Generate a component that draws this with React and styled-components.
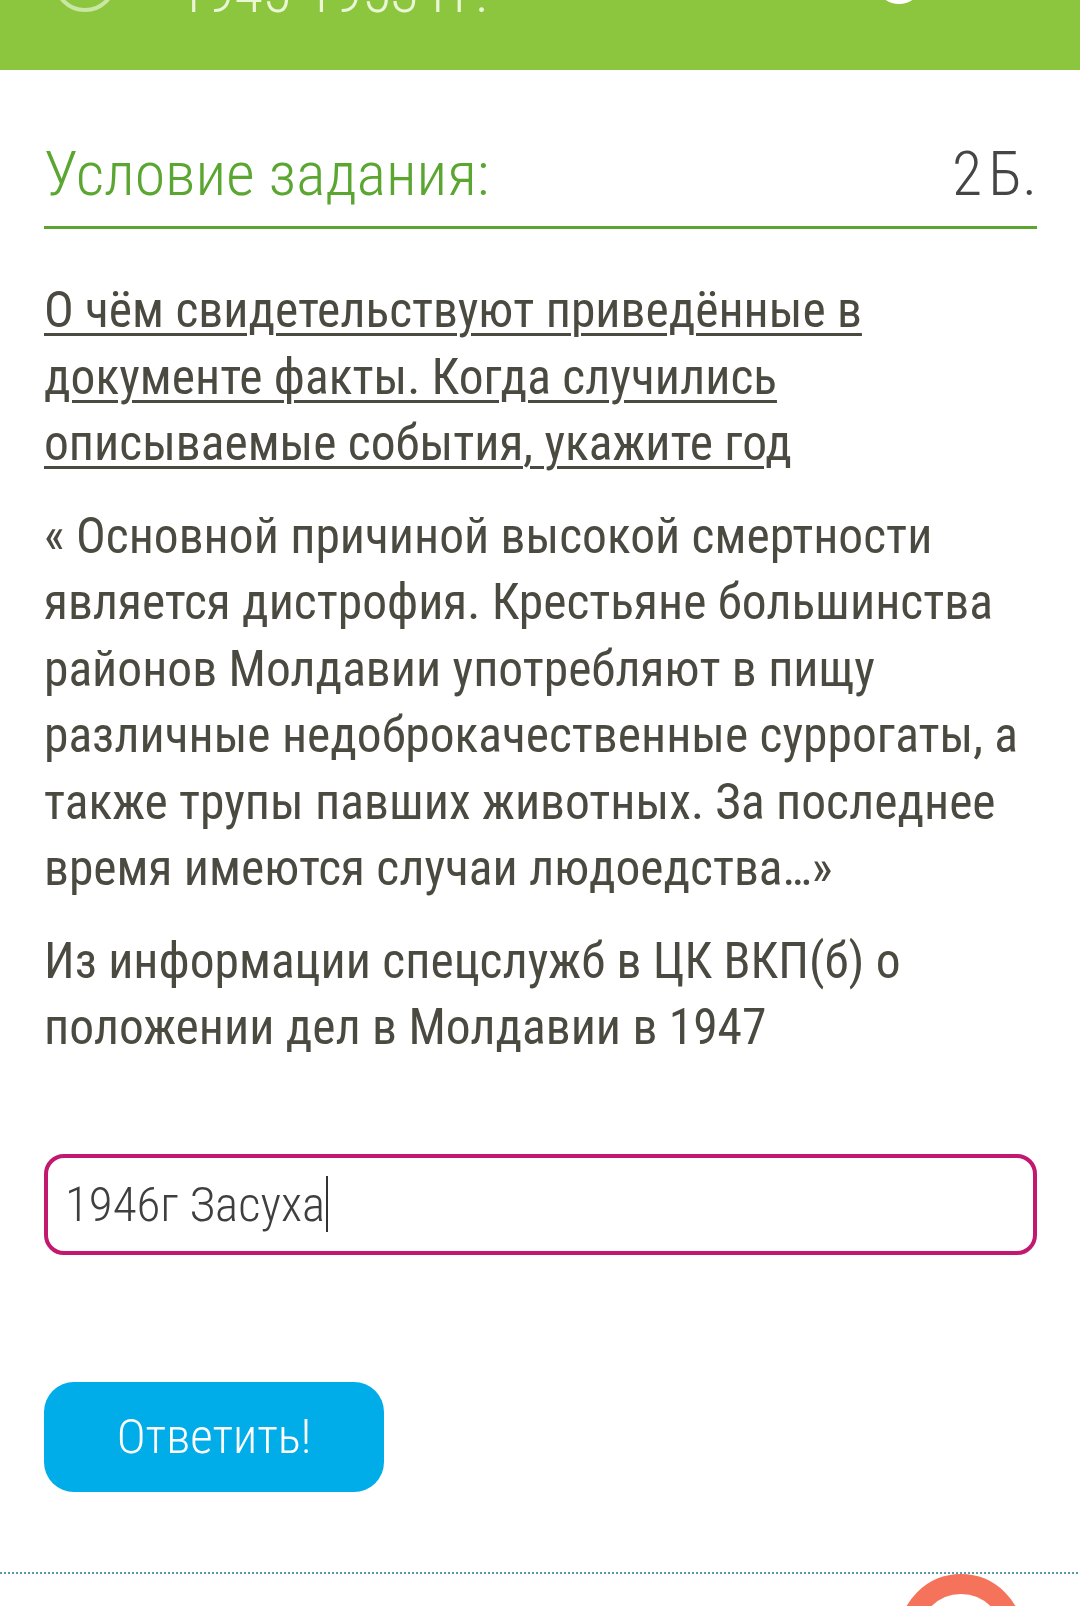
import React from 'react';
import styled, { createGlobalStyle } from 'styled-components';

const GlobalStyle = createGlobalStyle`
    html, body {
        margin: 0;
        padding: 0;
        background: #ffffff;
    }
    body {
        font-family: "Roboto Condensed", Roboto, sans-serif;
    }
`

const Page = styled.div`
    width: 1080px;
    height: 1606px;
    overflow: hidden;
    background: #ffffff;
`

const Header = styled.header`
    height: 70px;
    background: #8cc63f;
    overflow: hidden;
`

const HeaderRow = styled.div`
    display: flex;
    align-items: center;
    height: 80px;
    margin-top: -60px;
    padding: 0 157px 0 53px;
`

const Ring = styled.div`
    box-sizing: border-box;
    width: ${p => p.size}px;
    height: ${p => p.size}px;
    border-radius: 50%;
    border: ${p => p.stroke}px solid ${p => p.color};
    flex-shrink: 0;
`

const HeaderTitle = styled.div`
    flex: 1;
    margin: 24px 0 0 61px;
    font-size: 58px;
    font-weight: 300;
    color: #eaf6d6;
    white-space: nowrap;
`

const Main = styled.main`
    padding: 0 43px 0 44px;
`

const TaskHead = styled.div`
    display: flex;
    justify-content: space-between;
    align-items: baseline;
    margin-top: 66px;
    padding-bottom: 14px;
    border-bottom: 3px solid #5aa631;
    font-size: 62px;
    line-height: 76px;
    font-weight: 300;
`

const TaskTitle = styled.span`
    color: #5aa631;
`

const Points = styled.span`
    color: #454545;
    word-spacing: -8px;
`

const Paragraph = styled.p`
    margin: ${p => p.first ? '48px' : '26px'} 0 0;
    font-size: 49.5px;
    line-height: 66.5px;
    color: #4b4a40;
    text-decoration: ${p => p.underlined ? 'underline' : 'none'};
    text-decoration-thickness: 3px;
    text-underline-offset: 6px;
`

const AnswerBox = styled.div`
    box-sizing: border-box;
    display: flex;
    align-items: center;
    height: 101px;
    margin-top: 93px;
    padding: 0 17px;
    border: 4px solid #c2186f;
    border-radius: 20px;
    font-size: 49px;
    font-weight: 300;
    color: #3f3f3f;
`

const Caret = styled.span`
    display: inline-block;
    width: 2px;
    height: 56px;
    margin-left: 1px;
    background: #333333;
`

const SubmitButton = styled.button`
    display: block;
    width: 340px;
    height: 110px;
    margin-top: 127px;
    border: none;
    border-radius: 30px;
    background: #00ade9;
    color: #ffffff;
    font-family: inherit;
    font-size: 49px;
    font-weight: 300;
`

const Divider = styled.div`
    height: 2px;
    margin-top: 80px;
    background-image: linear-gradient(to right, #5b9aa8 50%, transparent 50%);
    background-size: 4px 2px;
`

const Footer = styled.div`
    display: flex;
    justify-content: flex-end;
    padding-right: 57px;
`

const App = () => {
    return (
        <Page>
            <GlobalStyle />
            <Header>
                <HeaderRow>
                    <Ring size={64} stroke={4} color="#c9e6a3" />
                    <HeaderTitle>1945-1953 гг.</HeaderTitle>
                    <Ring size={48} stroke={6} color="#ffffff" />
                </HeaderRow>
            </Header>
            <Main>
                <TaskHead>
                    <TaskTitle>Условие задания:</TaskTitle>
                    <Points>2 Б.</Points>
                </TaskHead>
                <Paragraph first underlined>
                    О чём свидетельствуют приведённые в документе факты. Когда случились описываемые события, укажите год
                </Paragraph>
                <Paragraph>
                    « Основной причиной высокой смертности является дистрофия. Крестьяне большинства районов Молдавии употребляют в пищу различные недоброкачественные суррогаты, а также трупы павших животных. За последнее время имеются случаи людоедства…»
                </Paragraph>
                <Paragraph>
                    Из информации спецслужб в ЦК ВКП(б) о положении дел в Молдавии в 1947
                </Paragraph>
                <AnswerBox>
                    1946г Засуха<Caret />
                </AnswerBox>
                <SubmitButton>Ответить!</SubmitButton>
            </Main>
            <Divider />
            <Footer>
                <Ring size={124} stroke={20} color="#f4735a" />
            </Footer>
        </Page>
    );
};

export default App;
